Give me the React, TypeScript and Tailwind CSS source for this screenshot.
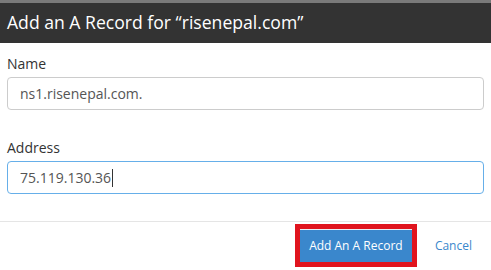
export default function App() {
  return (
    <div className="w-[491px] h-[270px] bg-white overflow-hidden font-['Open_Sans',sans-serif]">
      <div className="h-[3px] bg-[#7a7a7a]" />
      <div className="h-[40px] bg-[#333333] flex items-center px-[7px]">
        <h2 className="text-white text-[17.6px] leading-none">Add an A Record for “risenepal.com”</h2>
      </div>
      <div className="px-[7px] pt-[11px]">
        <label className="block text-[14px] leading-[20px] text-[#333]">Name</label>
        <div className="mt-[3px] h-[33px] w-[477px] border border-[#ccc] rounded-[4px] flex items-center px-[12px] text-[14px] text-[#555]">
          ns1.risenepal.com.
        </div>
        <label className="block mt-[28px] text-[14px] leading-[20px] text-[#333]">Address</label>
        <div className="mt-[3px] h-[33px] w-[477px] border border-[#66afe9] rounded-[4px] flex items-center px-[12px] text-[14px] text-[#555]">
          75.119.130.36<span className="inline-block w-px h-[18px] bg-[#333] ml-px" />
        </div>
      </div>
      <div className="mt-[27px] border-t border-[#e5e5e5] flex items-center justify-end pt-[2px] pr-[19px]">
        <div className="border-[5px] border-[#e0141e]">
          <button className="h-[33px] w-[112px] bg-[#3a87cc] border-t border-[#e8eef5] text-white text-[12px]">
            Add An A Record
          </button>
        </div>
        <span className="ml-[18px] text-[12px] text-[#3a87cc]">Cancel</span>
      </div>
    </div>
  );
}
